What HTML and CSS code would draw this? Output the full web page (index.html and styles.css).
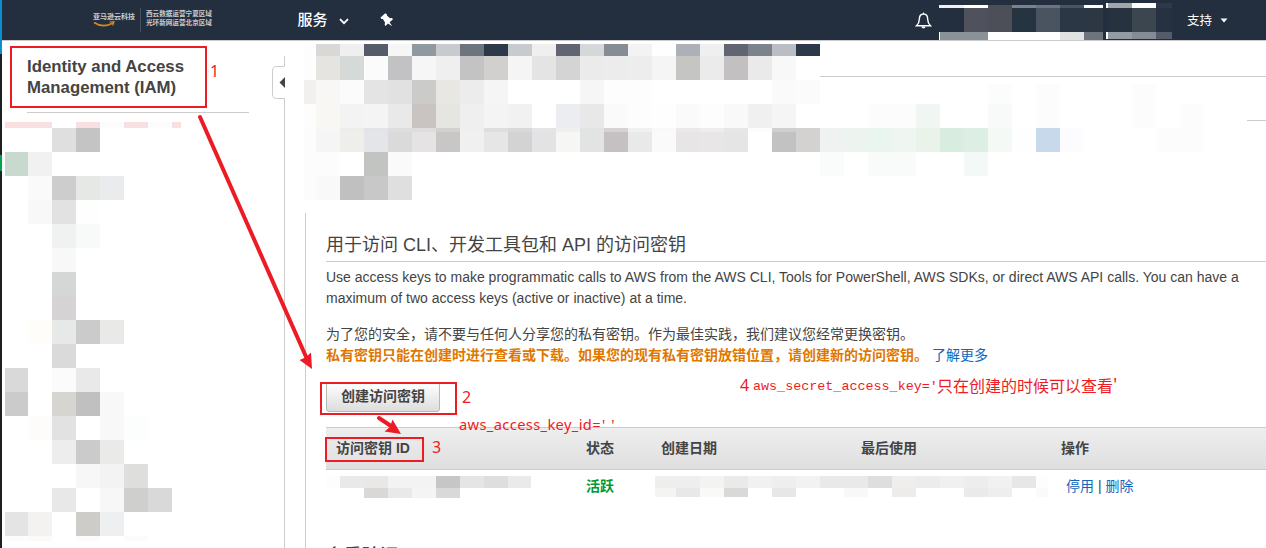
FILE: index.html
```
<!DOCTYPE html>
<html lang="zh-CN">
<head>
<meta charset="utf-8">
<title>IAM</title>
<link rel="stylesheet" href="styles.css">
</head>
<body>
<div class="desktop-edge"></div>
<div class="window">
  <header class="topbar">
    <div class="logo">
      <div class="brand">
        <span>亚马逊云科技</span>
        <svg class="smile" width="24" height="7" viewBox="0 0 24 7"><path d="M1 1.5Q10 7.500 20 2" fill="none" stroke="#d48a1c" stroke-width="1.600"/><path d="M16.500 1L21 .7 19.700 4.500" fill="none" stroke="#d48a1c" stroke-width="1.200"/></svg>
      </div>
      <div class="regions"><span>西云数据运营宁夏区域</span><span>光环新网运营北京区域</span></div>
    </div>
    <div class="services">服务</div>
    <svg class="chevron" width="10" height="7" viewBox="0 0 10 7"><path d="M1 1.200L5 5.200 9 1.200" fill="none" stroke="#fff" stroke-width="1.800"/></svg>
    <svg class="pin" width="14" height="14" viewBox="0 0 14 14"><path d="M5.300 0.300L7 1.500 6.900 2.500 10 5.200 12 5 13 6.200 9.600 9.200 12.200 13.300 8 10.400 5.500 13 4.700 11.800 5 9.400 2.900 6 1.300 6 .5 4.600Z" fill="#fff"/></svg>
    <svg class="bell" width="17" height="18" viewBox="0 0 17 18"><path d="M8.500 2C5.200 2 4.300 4.500 4.300 7.500 4.300 10.500 3.300 12 1.500 13.700H15.500C13.700 12 12.700 10.500 12.700 7.500 12.700 4.500 11.800 2 8.500 2Z" fill="none" stroke="#fff" stroke-width="1.400"/><path d="M8.500 .5V2M6.800 15A1.900 1.700 0 0 0 10.200 15Z" fill="#fff" stroke="#fff"/></svg>
    <svg class="account" width="233" height="40" viewBox="939 0 233 40" data-mosaic="account"></svg>
    <div class="support">支持</div>
    <svg class="caret" width="8" height="5" viewBox="0 0 8 5"><path d="M.5.5H7.500L4 4.500Z" fill="#fff"/></svg>
  </header>
  <div class="page">
    <nav class="sidebar">
      <h1>Identity and Access Management (IAM)</h1>
      <svg class="nav-mosaic" width="176" height="419" viewBox="5 122 176 419" data-mosaic="nav"></svg>
    </nav>
    <div class="divider">
      <svg width="14" height="492" viewBox="0 0 14 492"><path d="M12.500 0V10.500H4.500Q.5 10.500 .5 15V38Q.5 42.500 4.500 42.500H12.500V492" fill="none" stroke="#ccc"/><path d="M13 21V32L7.500 26.500Z" fill="#444"/></svg>
    </div>
    <main class="main">
      <svg class="summary" width="962" height="156" viewBox="304 44 962 156" data-mosaic="summary"></svg>
      <section class="panel">
        <h2>用于访问 CLI、开发工具包和 API 的访问密钥</h2>
        <p class="intro"><span class="first">Use access keys to make programmatic calls to AWS from the AWS CLI, Tools for PowerShell, AWS SDKs, or direct AWS API calls. You can have a</span><br>maximum of two access keys (active or inactive) at a time.</p>
        <p class="notice">为了您的安全，请不要与任何人分享您的私有密钥。作为最佳实践，我们建议您经常更换密钥。<br><b>私有密钥只能在创建时进行查看或下载。如果您的现有私有密钥放错位置，请创建新的访问密钥。</b><a>了解更多</a></p>
        <button class="create">创建访问密钥</button>
        <div class="row head"><span>访问密钥 ID</span><span>状态</span><span>创建日期</span><span>最后使用</span><span>操作</span></div>
        <div class="row item">
          <svg class="key" width="205" height="22" viewBox="326 476 205 22" data-mosaic="key"></svg>
          <span class="active">活跃</span>
          <svg class="dates" width="393" height="21" viewBox="655 476 393 21" data-mosaic="dates"></svg>
          <span class="actions"><a>停用</a> | <a>删除</a></span>
        </div>
        <h2 class="next">多重验证</h2>
      </section>
    </main>
  </div>
</div>
<svg class="marks" width="1266" height="548" viewBox="0 0 1266 548">
  <g fill="none" stroke="#ed1c24" stroke-width="2"><path d="M11 47H206V107H11ZM321 383H456V414H321ZM326 438H423V461H326Z"/></g>
  <g stroke="#ed1c24" stroke-width="4" stroke-linecap="round"><path d="M200 117L307 359M379 418L391 426"/></g>
  <path d="M312 369L299.500 360 305.500 357.500 311 352.500ZM401 434L384.500 431.500 390 427 392.500 419.500Z" fill="#ed1c24"/>
</svg>
<span class="note n1">1</span>
<span class="note n2">2</span>
<span class="note n3">3</span>
<span class="note keyid">aws_access_key_id=<span class="quotes">''</span></span>
<span class="note n4">4</span>
<span class="note secret">aws_secret_access_key='</span>
<span class="note secret-text">只在创建的时候可以查看'</span>
<script src="script.js"></script>
</body>
</html>
```
FILE: styles.css
```
* { box-sizing: border-box; }
body {
  margin: 0;
  width: 1266px;
  height: 548px;
  overflow: hidden;
  display: flex;
  position: relative;
  background: #fff;
  color: #444;
  font: 14px/21px "Liberation Sans", "Noto Sans CJK SC", sans-serif;
}
svg { display: block; flex: none; }
h1, h2, p { margin: 0; }
a { color: #1166bb; }
.desktop-edge {
  width: 2px;
  flex: none;
  background: linear-gradient(#0b8fd0 0 54px, #1d1f22 54px 155px, #00a551 155px 171px, #1d1f22 171px);
}
.window { width: 1264px; flex: none; }
.topbar {
  height: 41px;
  display: flex;
  align-items: flex-start;
  background: #232f3e;
  border-bottom: 1px solid #ccc;
  color: #fff;
  white-space: nowrap;
}
.logo { display: flex; margin: 8px 0 0 91px; width: 120px; height: 24px; color: #ccc; }
.brand { width: 48px; padding-top: 3px; border-right: 1px solid #46505d; font-size: 7px; line-height: 11px; font-weight: 700; }
.brand span { display: block; }
.smile { margin-top: -1px; }
.regions { padding: 1px 0 0 5px; font-size: 6.6px; line-height: 9px; font-weight: 700; }
.regions span { display: block; }
.services { margin: 9px 0 0 84.500px; width: 31px; font-size: 15px; font-weight: 500; }
.chevron { margin: 18px 0 0 10.500px; }
.pin { margin: 13px 0 0 31px; }
.bell { margin: 12px 0 0 521px; }
.account { margin-left: 7px; }
.support { margin: 11px 0 0 15px; width: 26px; font-size: 12.500px; }
.caret { margin: 18px 0 0 7px; }
.page { display: flex; height: 507px; }
.sidebar { width: 270px; padding: 15px 0 0 3px; flex: none; }
.sidebar h1 {
  width: 222px;
  height: 57px;
  margin: 0 0 9px 22px;
  padding-right: 40px;
  border-bottom: 1px solid #ccc;
  font-size: 16.800px;
  line-height: 21px;
  font-weight: 700;
}
.divider { width: 14px; padding-top: 15px; flex: none; }
.main { width: 980px; padding: 3px 0 0 18px; }
.panel { width: 961px; height: 335px; margin: 13px 0 0 1px; padding: 20px 0 0 20px; border-left: 1px solid #ccc; white-space: nowrap; }
.panel h2 { height: 29px; border-bottom: 1px solid #ccc; font-size: 18px; line-height: 24px; font-weight: 400; }
.intro { padding-top: 5px; }
.notice { padding-top: 15px; }
.notice b { color: #e07700; }
.notice a { margin-left: 4px; }
.create {
  display: block;
  width: 114px;
  height: 30px;
  margin: 16px 0 15px;
  padding: 0 0 3px;
  border: 1px solid #b8b8b8;
  border-radius: 3px;
  background: linear-gradient(#fff, #ddd);
  color: #444;
  font: 700 14px/24px "Liberation Sans", "Noto Sans CJK SC", sans-serif;
}
.row { display: grid; }
.head {
  grid-template-columns: 250px 75px 200px 200px 1fr;
  height: 43px;
  border: solid #ccc;
  border-width: 1px 0;
  background: linear-gradient(#eee, #dfdfdf);
  font-weight: 700;
  line-height: 40px;
}
.head span { padding-left: 10px; }
.item { grid-template-columns: 260px 69px 411px 1fr; height: 74px; padding-top: 6px; align-items: start; }
.active { color: #009933; font-weight: 700; }
.panel .next { border: 0; font-weight: 500; }
.marks { position: absolute; left: 0; top: 0; }
.note { position: absolute; color: #ed1c24; white-space: pre; font: 16px/20px "Noto Sans", "Noto Sans CJK SC", sans-serif; }
.n1 { left: 210px; top: 61px; }
.n2 { left: 462px; top: 387px; }
.n3 { left: 432px; top: 437px; }
.keyid { left: 459px; top: 414px; font-size: 14.700px; letter-spacing: .35px; }
.quotes { margin-left: 1px; letter-spacing: 6px; }
.n4 { left: 740px; top: 375px; }
.secret { left: 753px; top: 377px; font: 13.400px/20px "Liberation Mono", monospace; }
.secret-text { left: 937px; top: 375px; font-family: "Noto Sans CJK SC", sans-serif; font-weight: 400; }
```
FILE: script.js
```
// Each band: top, height, then runs of [left, cell width, colours]; "-" leaves a cell empty.
const mosaics = {
  account: [
    [5, 3, [939, 25, "eef0f1"], [964, 24, "ffffff 4b4f58 7b828b 6d747e 4b5562"], [1084, 19, "ffffff"]],
    [8, 24, [940, 24, "232f3e"], [964, 24, "4f525c 4d4f58 263341 4a5460 2b3745"], [1084, 19, "2d3743"]],
    [32, 8, [939, 1, "ffffff"], [940, 24, "8a9197 8a9197 ffffff ffffff ffffff e1e2e4"], [1084, 19, "6d747e"]],
    [3, 5, [1106, 2, "ffffff"], [1108, 24, "a1a6ad ffffff"], [1156, 16, "2d3948"]],
    [8, 24, [1108, 24, "27323f 3c464f"], [1156, 16, "263241"]],
    [32, 7, [1106, 2, "ffffff"], [1108, 24, "949ba2 858c94"], [1156, 16, "565b69"]]
  ],
  nav: [
    [122, 6, [5, 23, "f9dfdf"], [28, 24, "f9e0e0 - f9dfdf fcfcfc f8e0e0 fcfcfc"], [172, 9, "f9e0e0"]],
    [128, 24, [52, 24, "dfdfdf c4c4c4"]],
    [152, 24, [5, 23, "c8d9d0"], [28, 24, "f1f1f1"]],
    [176, 24, [28, 24, "fafafa cdcdcd e6e8e6 e9ebed"]],
    [200, 24, [28, 24, "f8f8f8 e2e2e2 fefefe"]],
    [224, 24, [52, 24, "eff2f0 f8faf9"]],
    [248, 24, [52, 24, "f8f8f8"]],
    [272, 24, [52, 24, "d4d7d5"]],
    [296, 24, [52, 24, "d5d3d4"]],
    [320, 24, [28, 24, "fefdfa e7e8e8 cbcbcb e9e9e7"]],
    [344, 24, [52, 24, "dadada"]],
    [368, 24, [5, 23, "d9d9d9"], [52, 24, "fbfbfb e9e9e9"]],
    [392, 24, [5, 23, "cbcbcb"], [52, 24, "d7d5d2 c0c0c0 f8f8f8"]],
    [416, 24, [28, 24, "fdfcfa e2e2e2 - f8f8f8 fcfefd"]],
    [440, 24, [52, 24, "ededed cbcbcb eaeae8"]],
    [464, 24, [76, 24, "f7f7f7 f3f3f3 dededc"]],
    [488, 24, [52, 24, "e8e8e8 - f7f7f7 cfcfcd d9d9d9"]],
    [512, 24, [5, 23, "e4e4e4"], [28, 24, "f3f2f0 - cdccc8 edeff1"]],
    [536, 5, [5, 23, "fcfcfc"], [28, 24, "fafafa - fbfbfb - fbfbfb"]]
  ],
  summary: [
    [44, 12, [304, 12, "fdfdfd"], [316, 24, "d8d9d7 efefef 565b69 f6f6f6 9199a0 c7cbce 6d747e 2d3948 c7cbce efefef 606571 d6d7d8 858c93 f3f3f3 fefefe adb0b6 efefef 606571 7b828b babec4 2d3948"]],
    [56, 24, [304, 12, "fdfdfd"], [316, 24, "e5e4e1 d5d9d7 fbfbfb c2c2c4 f6f6f6 efefef c3c3c3 d1d0ce f5f5f5 e4e4e4 d4d4d4 ebebeb ececec ededed f5f5f5 c5c5c3 ebebeb c3c0c1 eaeaea f8f8f8"]],
    [80, 24, [304, 12, "f1f0ee"], [316, 24, "f8f7f5 fbfbfb e4e4e4 e1e1e1 cbcbc9 e8e7e4 ececec f5f5f5 - - - f6f6f6 fdfdfd fdfdfd - - - - - fafafa fbfbfb"]],
    [84, 20, [988, 24, "fcfcfc - fcfcfc"], [1132, 24, "fcfcfc"]],
    [104, 24, [304, 12, "fdfdfd"], [316, 24, "f8f7f4 f3f3f3 f4f4f4 e9e9e9 c9c4c1 e5e5e2 efefef f4f4f4 f1f1f1 - ecedf0 e8e8e8 fafafa fdfdfd fefefe fafafa fdfdfd f9f9f9 f0f0f0 f5f5f5 - - - fcfcfc fcfcfc f2f6f3 - - f8faf9 - fcfcfc - - - fcfcfc - fcfcfc"]],
    [128, 24, [304, 12, "fcfcfc"], [316, 24, "f5f5f5 eeeeeb e4e5e8 dadada e5e3e4 c8c7c5 f0f0f0 e6e6e6 d3d3d3 e3e3e5 f6f6f4 e1e4e2 c5c0c2 e9e9e9 fafafa e8e5e7 e8e6e7 e5e5e5 - c2c2c2 d3d2d0 f0f2f1 edf4f0 ebf5f0 eff5f1 e9f3ea d9ece0 ddeee4 f5f9f6 fefefe c9d9ec fcfcfe - - - fcfcfc fcfcfc"]],
    [128, 4, [316, 24, "f6f6f6 ededed e3e4e7 dedede dedcde d1d1cd efefef dedede d8d8d8 e4e4e4 f0f0f0 e2e3e3 d4d2d3 f0f0f0 f9f9f9 eae9ea ededed e6e6e6 fcfcfc cfcfcf d3d2d0"]],
    [152, 24, [304, 12, "fcfcfc"], [316, 24, "fcfcfc - c2c4c2 fafafa"], [820, 24, "fafcfb - f9fbfa f9fbfa - - f3f9f6"]],
    [176, 24, [304, 12, "fcfcfc"], [316, 24, "f9f9f9 c0c0c0 c8c8c8 dfdfdf"]],
    [76, 1, [820, 446, "cccccc"]],
    [120, 1, [1247, 19, "cccccc"]]
  ],
  key: [
    [476, 12, [326, 14, "fdfdfd"], [340, 24, "e9e9e9 e8e8e8 f3f3f3 f3f3f3 c6c6c6 e5e5e5 dcdfdd"], [508, 23, "eaeaea"]],
    [488, 10, [364, 24, "d9d8d6 e9e9e9 f4f4f4 d9d9d9"]]
  ],
  dates: [
    [476, 12, [655, 21, "eeeeec"], [676, 24, "eeeeee f3f3f3 ebeae8 f1f1f1 eeeeee f2f2f2 e9e9e9 e9e9e9 dedede eeeeee ececec f0f0f0 ededed f1f1f1 e8e7e5"], [1036, 12, "fdfdfd"]],
    [488, 9, [655, 21, "f4f4f2"], [676, 24, "e8e8e8 f9f9f7 d9d9d9 - e6e8e7 - - f8f8f8 - edecea - - eaeaea eeeeee"], [1036, 12, "fafafa"]]
  ]
};

for (const svg of document.querySelectorAll("[data-mosaic]")) {
  for (const [top, height, ...runs] of mosaics[svg.dataset.mosaic]) {
    for (const [left, width, colours] of runs) {
      colours.split(" ").forEach((colour, i) => {
        if (colour === "-") return;
        const cell = document.createElementNS("http://www.w3.org/2000/svg", "rect");
        const box = { x: left + i * width, y: top, width, height, fill: "#" + colour };
        for (const name in box) cell.setAttribute(name, box[name]);
        svg.append(cell);
      });
    }
  }
}
```
